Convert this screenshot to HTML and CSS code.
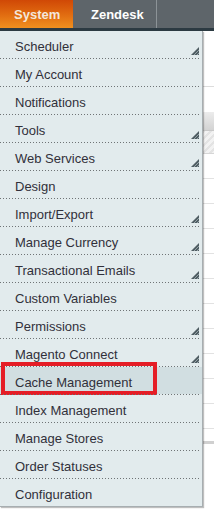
FILE: index.html
```html
<!DOCTYPE html>
<html lang="en">
<head>
    <meta charset="UTF-8">
    <meta name="viewport" content="width=device-width, initial-scale=1.0">
    <title>Magento Admin - System Menu</title>
    <link rel="stylesheet" href="styles.css">
</head>
<body>

    <div class="page">
        <div class="nav-bar">
            <a class="nav-tab active" href="#">System</a>
            <a class="nav-tab" href="#">Zendesk</a>
        </div>

        <!-- page content behind the dropdown -->
        <div class="content">
            <div class="content-top"></div>
            <div class="grid-head"></div>
            <div class="grid-filter"></div>
            <div class="grid-row"></div>
            <div class="grid-row"></div>
            <div class="grid-row"></div>
            <div class="grid-row"></div>
            <div class="grid-row"></div>
            <div class="grid-row"></div>
            <div class="grid-row"></div>
            <div class="grid-row"></div>
            <div class="grid-row"></div>
            <div class="grid-row"></div>
            <div class="grid-row"></div>
            <div class="grid-foot"></div>
        </div>

        <ul class="dropdown">
            <li class="has-sub">Scheduler</li>
            <li>My Account</li>
            <li>Notifications</li>
            <li class="has-sub">Tools</li>
            <li class="has-sub">Web Services</li>
            <li>Design</li>
            <li class="has-sub">Import/Export</li>
            <li class="has-sub">Manage Currency</li>
            <li class="has-sub">Transactional Emails</li>
            <li>Custom Variables</li>
            <li class="has-sub">Permissions</li>
            <li class="has-sub">Magento Connect</li>
            <li class="over marked">Cache Management</li>
            <li>Index Management</li>
            <li>Manage Stores</li>
            <li>Order Statuses</li>
            <li>Configuration</li>
        </ul>
    </div>

    <script>
        // little hatched arrow on items that open a submenu
        const arrow = '<svg class="sub-arrow" width="8" height="8" viewBox="0 0 8 8">' +
            '<polygon points="0,8 8,0 8,8" fill="#4f5d63"/>' +
            '<line x1="3" y1="8" x2="8" y2="3" stroke="#a9b6ba" stroke-width="0.8"/>' +
            '<line x1="6" y1="8" x2="8" y2="6" stroke="#a9b6ba" stroke-width="0.8"/>' +
            '</svg>';

        document.querySelectorAll('.dropdown .has-sub').forEach(function (item) {
            item.insertAdjacentHTML('beforeend', arrow);
        });
    </script>

</body>
</html>
```

FILE: styles.css
```css
body {
    margin: 0;
    padding: 0;
    font-family: "Liberation Sans", Arial, sans-serif;
    font-size: 13px;
    background-color: #ffffff;
}

.page {
    position: relative;
    width: 214px;
    height: 511px;
    overflow: hidden;
}

/* top navigation */
.nav-bar {
    display: flex;
    height: 28px;
    background-color: #5e656a;
    border-top: 1px solid #4a5257;
    border-bottom: 3px solid #2c3a42;
    box-sizing: content-box;
    margin-top: -1px;
}

.nav-tab {
    display: block;
    height: 28px;
    line-height: 28px;
    padding: 1px 12px 0 18px;
    box-sizing: border-box;
    color: #ffffff;
    font-weight: bold;
    text-decoration: none;
    border-right: 1px solid #8c9397;
}

.nav-tab.active {
    width: 73px;
    padding-left: 14px;
    color: #f4e7da;
    border-right: none;
    background: linear-gradient(to bottom, #d04806, #e06a10 50%, #f0901f);
}

/* background page */
.content {
    display: flex;
    flex-direction: column;
}

.content-top {
    height: 55px;
    border-bottom: 1px solid #dcdcdc;
}

.grid-head {
    margin-top: 25px;
    height: 18px;
    background: linear-gradient(to bottom, #ececec, #d3d3d3);
    border-bottom: 1px solid #c8c8c8;
}

.grid-filter {
    height: 22px;
    background: repeating-linear-gradient(135deg, #f2f2f2 0 3px, #e3e3e3 3px 5px);
    border-bottom: 1px solid #d6d6d6;
}

.grid-row {
    height: 24px;
    border-bottom: 1px solid #e2e2e2;
}

.grid-foot {
    height: 3px;
    margin-top: 12px;
    background-color: #d0d0d0;
}

/* dropdown menu */
.dropdown {
    position: absolute;
    top: 31px;
    left: 0;
    width: 202px;
    margin: 0;
    padding: 0;
    list-style: none;
    background-color: #e2ebed;
    border-right: 1px solid #a7aeb1;
    border-bottom: 1px solid #a7aeb1;
    box-shadow: 1px 1px 1px rgba(0, 0, 0, 0.25);
}

.dropdown li {
    position: relative;
    height: 27px;
    padding: 4px 0 0 15px;
    box-sizing: border-box;
    line-height: 23px;
    color: #31303a;
    margin-bottom: 1px;
}

.dropdown li::after {
    content: "";
    position: absolute;
    left: 0;
    right: 2px;
    bottom: -1px;
    height: 1px;
    background: repeating-linear-gradient(to right, #6f7476 0 1px, transparent 1px 3px);
}

.dropdown li:last-child {
    margin-bottom: 0;
}

.dropdown li:last-child::after {
    display: none;
}

.dropdown li.over {
    background-color: #d1dee1;
}

/* annotation box round the item */
.dropdown li.marked::before {
    content: "";
    position: absolute;
    top: -5px;
    left: 1px;
    width: 156px;
    height: 33px;
    box-sizing: border-box;
    border: 4px solid #e51d26;
}

.sub-arrow {
    position: absolute;
    right: 3px;
    bottom: 3px;
}
```
